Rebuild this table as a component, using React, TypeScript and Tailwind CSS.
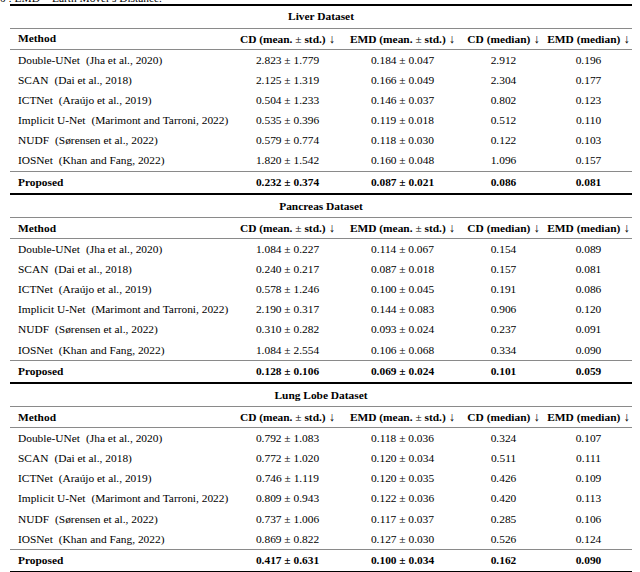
import React from "react";

const methods = [
  ["Double-UNet", "(Jha et al., 2020)"],
  ["SCAN", "(Dai et al., 2018)"],
  ["ICTNet", "(Araújo et al., 2019)"],
  ["Implicit U-Net", "(Marimont and Tarroni, 2022)"],
  ["NUDF", "(Sørensen et al., 2022)"],
  ["IOSNet", "(Khan and Fang, 2022)"],
];

const sections: { title: string; rows: string[][]; best: string[] }[] = [
  {
    title: "Liver Dataset",
    rows: [
      ["2.823 ± 1.779", "0.184 ± 0.047", "2.912", "0.196"],
      ["2.125 ± 1.319", "0.166 ± 0.049", "2.304", "0.177"],
      ["0.504 ± 1.233", "0.146 ± 0.037", "0.802", "0.123"],
      ["0.535 ± 0.396", "0.119 ± 0.018", "0.512", "0.110"],
      ["0.579 ± 0.774", "0.118 ± 0.030", "0.122", "0.103"],
      ["1.820 ± 1.542", "0.160 ± 0.048", "1.096", "0.157"],
    ],
    best: ["0.232 ± 0.374", "0.087 ± 0.021", "0.086", "0.081"],
  },
  {
    title: "Pancreas Dataset",
    rows: [
      ["1.084 ± 0.227", "0.114 ± 0.067", "0.154", "0.089"],
      ["0.240 ± 0.217", "0.087 ± 0.018", "0.157", "0.081"],
      ["0.578 ± 1.246", "0.100 ± 0.045", "0.191", "0.086"],
      ["2.190 ± 0.317", "0.144 ± 0.083", "0.906", "0.120"],
      ["0.310 ± 0.282", "0.093 ± 0.024", "0.237", "0.091"],
      ["1.084 ± 2.554", "0.106 ± 0.068", "0.334", "0.090"],
    ],
    best: ["0.128 ± 0.106", "0.069 ± 0.024", "0.101", "0.059"],
  },
  {
    title: "Lung Lobe Dataset",
    rows: [
      ["0.792 ± 1.083", "0.118 ± 0.036", "0.324", "0.107"],
      ["0.772 ± 1.020", "0.120 ± 0.034", "0.511", "0.111"],
      ["0.746 ± 1.119", "0.120 ± 0.035", "0.426", "0.109"],
      ["0.809 ± 0.943", "0.122 ± 0.036", "0.420", "0.113"],
      ["0.737 ± 1.006", "0.117 ± 0.037", "0.285", "0.106"],
      ["0.869 ± 0.822", "0.127 ± 0.030", "0.526", "0.124"],
    ],
    best: ["0.417 ± 0.631", "0.100 ± 0.034", "0.162", "0.090"],
  },
];

const grid = "grid grid-cols-[222px_111px_119px_83px_87px] items-center";

function Thin() {
  return <div className="h-px bg-[#8a8a8a]" />;
}
function Thick() {
  return <div className="h-[2px] bg-black" />;
}

function Arrow() {
  return <span className="text-[12.5px]"> ↓</span>;
}

export default function App() {
  return (
    <div className="w-[640px] h-[572px] bg-white text-black overflow-hidden text-[11.4px] font-['Liberation_Serif','Times_New_Roman',serif]">
      <div className="h-[4px] overflow-hidden">
        <div className="leading-[11px] mt-[-7px] whitespace-nowrap">0 : EMD = Earth Mover's Distance.</div>
      </div>
      <div className="ml-[10px] w-[622px]">
        <Thick />
        {sections.map((s) => (
          <div key={s.title}>
            <div className="h-[22px] flex items-center justify-center font-bold">{s.title}</div>
            <Thin />
            <div className={`${grid} h-[20px] font-bold`}>
              <div className="pl-[8px]">Method</div>
              <div className="text-center whitespace-nowrap">
                CD (mean. <span className="font-normal">±</span> std.)
                <Arrow />
              </div>
              <div className="text-center whitespace-nowrap">
                EMD (mean. <span className="font-normal">±</span> std.)
                <Arrow />
              </div>
              <div className="text-center whitespace-nowrap">
                CD (median)
                <Arrow />
              </div>
              <div className="text-center whitespace-nowrap">
                EMD (median)
                <Arrow />
              </div>
            </div>
            <Thin />
            {s.rows.map((r, i) => (
              <div key={i} className={`${grid} h-[20.2px]`}>
                <div className="pl-[8px] whitespace-nowrap">
                  {methods[i][0]}
                  <span className="ml-[6px]">{methods[i][1]}</span>
                </div>
                <div className="text-center">{r[0]}</div>
                <div className="text-center">{r[1]}</div>
                <div className="text-center">{r[2]}</div>
                <div className="text-center">{r[3]}</div>
              </div>
            ))}
            <Thin />
            <div className={`${grid} h-[21px] font-bold`}>
              <div className="pl-[8px]">Proposed</div>
              <div className="text-center">{s.best[0]}</div>
              <div className="text-center">{s.best[1]}</div>
              <div className="text-center">{s.best[2]}</div>
              <div className="text-center">{s.best[3]}</div>
            </div>
            <Thick />
          </div>
        ))}
      </div>
    </div>
  );
}
